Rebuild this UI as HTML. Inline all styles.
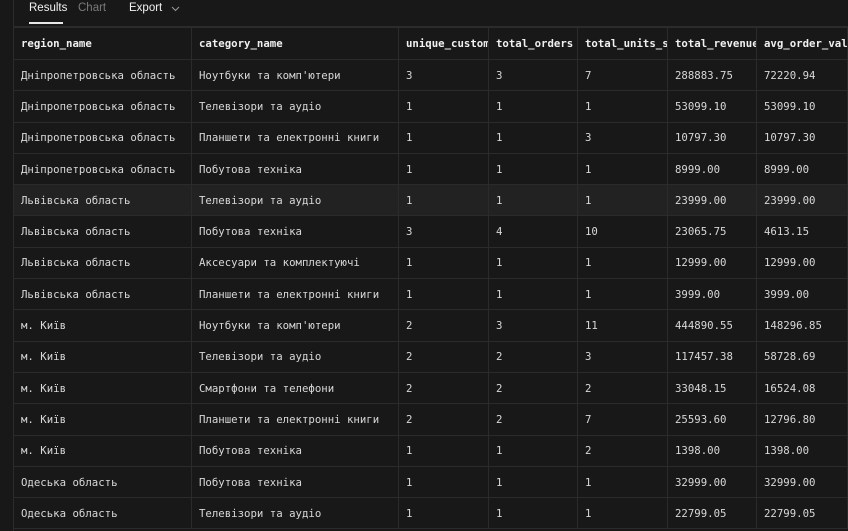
<!DOCTYPE html>
<html><head><meta charset="utf-8"><style>
body{margin:0;width:848px;height:531px;background:#181818;overflow:hidden;position:relative;font-family:"DejaVu Sans Mono","Liberation Mono",monospace;}
.strip{position:absolute;left:0;top:0;width:13px;height:531px;background:#181818;border-right:1px solid #2b2b2b;}
.tabs{position:absolute;left:14px;top:0;right:0;height:26px;border-bottom:1px solid #2b2b2b;font-family:"Liberation Sans",sans-serif;font-size:11.5px;}
.tab{position:absolute;top:2px;}
table{position:absolute;left:13px;top:27px;width:834px;border-collapse:collapse;table-layout:fixed;}
td{border:1px solid #2b2b2b;height:31.3px;padding:0 0 0 7px;font-size:10.7px;color:#d8d8d8;white-space:nowrap;overflow:hidden;text-overflow:clip;box-sizing:border-box;max-width:0;}
tr.h td{font-weight:bold;color:#f0f0f0;height:32px;}
tr.hl td{background:#222222;}
</style></head><body>
<div class="strip"></div>
<div class="tabs">
<span class="tab" style="left:15px;color:#f2f2f2">Results</span>
<div style="position:absolute;left:15px;top:22px;width:34px;height:2px;background:#e8e8e8"></div>
<span class="tab" style="left:64px;color:#7a7a7a">Chart</span>
<span class="tab" style="left:115px;color:#f2f2f2">Export</span>
<svg style="position:absolute;left:157px;top:6px" width="9" height="6" viewBox="0 0 9 6"><path d="M1 1l3.5 3.5L8 1" stroke="#999" fill="none" stroke-width="1"/></svg>
</div>
<table>
<colgroup><col style="width:178px"><col style="width:207px"><col style="width:90px"><col style="width:89px"><col style="width:90px"><col style="width:89px"><col style="width:91px"></colgroup>
<tr class="h"><td>region_name</td><td>category_name</td><td>unique_customers</td><td>total_orders</td><td>total_units_sold</td><td>total_revenue</td><td>avg_order_value</td></tr>
<tr><td>Дніпропетровська область</td><td>Ноутбуки та комп'ютери</td><td>3</td><td>3</td><td>7</td><td>288883.75</td><td>72220.94</td></tr>
<tr><td>Дніпропетровська область</td><td>Телевізори та аудіо</td><td>1</td><td>1</td><td>1</td><td>53099.10</td><td>53099.10</td></tr>
<tr><td>Дніпропетровська область</td><td>Планшети та електронні книги</td><td>1</td><td>1</td><td>3</td><td>10797.30</td><td>10797.30</td></tr>
<tr><td>Дніпропетровська область</td><td>Побутова техніка</td><td>1</td><td>1</td><td>1</td><td>8999.00</td><td>8999.00</td></tr>
<tr class="hl"><td>Львівська область</td><td>Телевізори та аудіо</td><td>1</td><td>1</td><td>1</td><td>23999.00</td><td>23999.00</td></tr>
<tr><td>Львівська область</td><td>Побутова техніка</td><td>3</td><td>4</td><td>10</td><td>23065.75</td><td>4613.15</td></tr>
<tr><td>Львівська область</td><td>Аксесуари та комплектуючі</td><td>1</td><td>1</td><td>1</td><td>12999.00</td><td>12999.00</td></tr>
<tr><td>Львівська область</td><td>Планшети та електронні книги</td><td>1</td><td>1</td><td>1</td><td>3999.00</td><td>3999.00</td></tr>
<tr><td>м. Київ</td><td>Ноутбуки та комп'ютери</td><td>2</td><td>3</td><td>11</td><td>444890.55</td><td>148296.85</td></tr>
<tr><td>м. Київ</td><td>Телевізори та аудіо</td><td>2</td><td>2</td><td>3</td><td>117457.38</td><td>58728.69</td></tr>
<tr><td>м. Київ</td><td>Смартфони та телефони</td><td>2</td><td>2</td><td>2</td><td>33048.15</td><td>16524.08</td></tr>
<tr><td>м. Київ</td><td>Планшети та електронні книги</td><td>2</td><td>2</td><td>7</td><td>25593.60</td><td>12796.80</td></tr>
<tr><td>м. Київ</td><td>Побутова техніка</td><td>1</td><td>1</td><td>2</td><td>1398.00</td><td>1398.00</td></tr>
<tr><td>Одеська область</td><td>Побутова техніка</td><td>1</td><td>1</td><td>1</td><td>32999.00</td><td>32999.00</td></tr>
<tr><td>Одеська область</td><td>Телевізори та аудіо</td><td>1</td><td>1</td><td>1</td><td>22799.05</td><td>22799.05</td></tr>
</table>
</body></html>
